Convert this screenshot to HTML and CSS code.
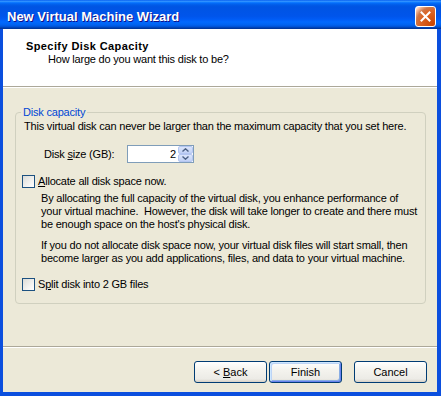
FILE: index.html
```html
<!DOCTYPE html>
<html lang="en">
<head>
  <meta charset="UTF-8" />
  <title>New Virtual Machine Wizard</title>
  <link rel="stylesheet" href="styles.css">
</head>
<body>
  <div class="window">
    <div class="titlebar">
      <span class="title">New Virtual Machine Wizard</span>
      <button class="close-btn" aria-label="Close">
        <svg width="11" height="11" viewBox="0 0 11 11"><path d="M1.5 1.5 L9.5 9.5 M9.5 1.5 L1.5 9.5" stroke="#fff" stroke-width="2" stroke-linecap="square"/></svg>
      </button>
    </div>

    <div class="frame">
      <div class="header">
        <div class="header-title">Specify Disk Capacity</div>
        <div class="header-sub">How large do you want this disk to be?</div>
      </div>

      <div class="content">
        <fieldset class="group">
          <legend>Disk capacity</legend>
          <p class="intro">This virtual disk can never be larger than the maximum capacity that you set here.</p>

          <div class="size-row">
            <label class="size-label">Disk <u>s</u>ize (GB):</label>
            <div class="spin">
              <span class="spin-value">2</span>
              <div class="spin-buttons">
                <span class="spin-btn"><svg width="7" height="4" viewBox="0 0 7 4"><path d="M0.5 3.5 L3.5 0.8 L6.5 3.5" fill="none" stroke="#4d6185" stroke-width="1.4"/></svg></span>
                <span class="spin-btn"><svg width="7" height="4" viewBox="0 0 7 4"><path d="M0.5 0.5 L3.5 3.2 L6.5 0.5" fill="none" stroke="#4d6185" stroke-width="1.4"/></svg></span>
              </div>
            </div>
          </div>

          <label class="check-row">
            <input type="checkbox">
            <span><u>A</u>llocate all disk space now.</span>
          </label>
          <p class="note">By allocating the full capacity of the virtual disk, you enhance performance of<br>your virtual machine.&nbsp; However, the disk will take longer to create and there must<br>be enough space on the host's physical disk.</p>
          <p class="note">If you do not allocate disk space now, your virtual disk files will start small, then<br>become larger as you add applications, files, and data to your virtual machine.</p>

          <label class="check-row split-row">
            <input type="checkbox">
            <span>S<u>p</u>lit disk into 2 GB files</span>
          </label>
        </fieldset>
      </div>

      <div class="footer">
        <button class="btn back-btn">&lt; <u>B</u>ack</button>
        <button class="btn btn-default">Finish</button>
        <button class="btn">Cancel</button>
      </div>
    </div>
  </div>
</body>
</html>
```

FILE: styles.css
```css
* {
  margin: 0;
  padding: 0;
  box-sizing: border-box;
}
body {
  width: 441px;
  height: 396px;
  overflow: hidden;
  font-family: 'Liberation Sans', Arial, sans-serif;
  font-size: 11px;
  line-height: 13px;
  letter-spacing: -0.2px;
  color: #000;
  background: #ece9d8;
}
.window {
  width: 441px;
  height: 396px;
  display: flex;
  flex-direction: column;
}
.titlebar {
  height: 29px;
  padding: 4px 5px 0 7px;
  display: flex;
  align-items: center;
  justify-content: space-between;
  background: linear-gradient(to bottom, #0058ee 0%, #3593ff 4%, #288eff 6%, #127dff 8%, #036ffc 10%, #0262ee 14%, #0057e5 20%, #0054e3 24%, #0055eb 56%, #005bf5 66%, #026afe 76%, #0062ef 86%, #0052d6 92%, #0040ab 96%, #003092 100%);
}
.title {
  color: #fff;
  font-size: 13px;
  font-weight: bold;
  letter-spacing: 0;
  text-shadow: 1px 1px #0f1089;
}
.close-btn {
  width: 21px;
  height: 21px;
  border: 1px solid #fff;
  border-radius: 3px;
  background: radial-gradient(circle at 90% 90%, #cc4600 0%, #dc6527 55%, #cd7546 70%, #ffccb2 90%, #fff 100%);
  display: flex;
  align-items: center;
  justify-content: center;
}
.frame {
  flex: 1;
  display: flex;
  flex-direction: column;
  border-style: solid;
  border-color: #0b4fde;
  border-width: 0 4px 4px 3px;
}
.header {
  height: 58px;
  background: #fff;
  padding: 10px 0 0 23px;
  border-bottom: 1px solid #aca899;
}
.header-title {
  font-weight: bold;
  line-height: 14px;
  letter-spacing: 0.4px;
}
.header-sub {
  margin-left: 22px;
}
.content {
  height: 260px;
  border-top: 1px solid #fff;
  border-bottom: 1px solid #aca899;
  padding: 18px 11px 0 12px;
}
.group {
  border: 1px solid #d0d0bf;
  border-radius: 4px;
  padding: 0 8px 12px 8px;
  min-width: 0;
}
.group legend {
  margin-left: -3px;
  padding: 0 2px;
  color: #0046d5;
}
.intro {
  margin-top: 1px;
  white-space: nowrap;
}
.size-row {
  display: flex;
  align-items: center;
  margin-top: 12px;
  padding-left: 20px;
}
.size-label {
  width: 83px;
}
.spin {
  width: 67px;
  height: 18px;
  border: 1px solid #7f9db9;
  background: #fff;
  display: flex;
  justify-content: flex-end;
  align-items: center;
}
.spin-value {
  padding-right: 2px;
}
.spin-buttons {
  width: 15px;
  height: 16px;
  display: flex;
  flex-direction: column;
}
.spin-btn {
  flex: 1;
  display: flex;
  align-items: center;
  justify-content: center;
  background: linear-gradient(to bottom, #dbe5fb, #c1d1f6);
  border: 1px solid #b4c6f1;
  border-radius: 2px;
}
.check-row {
  display: flex;
  align-items: center;
  gap: 3px;
  height: 13px;
  margin: 12px 0 0 -2px;
}
.check-row input {
  appearance: none;
  width: 13px;
  height: 13px;
  border: 1px solid #1c5180;
  background: linear-gradient(135deg, #dcdcd7 0%, #f6f6f4 70%, #fff 100%);
}
.note {
  margin: 4px 0 0 17px;
  white-space: nowrap;
}
.note + .note {
  margin-top: 8px;
}
.split-row {
  margin-top: 13px;
}
.footer {
  flex: 1;
  display: flex;
  justify-content: flex-end;
  align-items: flex-start;
  padding: 13px 10px 0 0;
  border-top: 1px solid #fff;
}
.btn {
  width: 73px;
  height: 22px;
  font-family: inherit;
  font-size: 11px;
  color: #000;
  border: 1px solid #003c74;
  border-radius: 3px;
  background: linear-gradient(to bottom, #fff 0%, #f4f3ee 40%, #ecebe6 85%, #d6d0c5 100%);
}
.back-btn {
  margin-right: 2px;
}
.btn-default {
  margin-right: 12px;
  box-shadow: inset 1px 1px 0 #cee7ff, inset -1px -1px 0 #6982ee, inset 2px 2px 0 #bcd4f6, inset -2px -2px 0 #89ade4;
}
```
